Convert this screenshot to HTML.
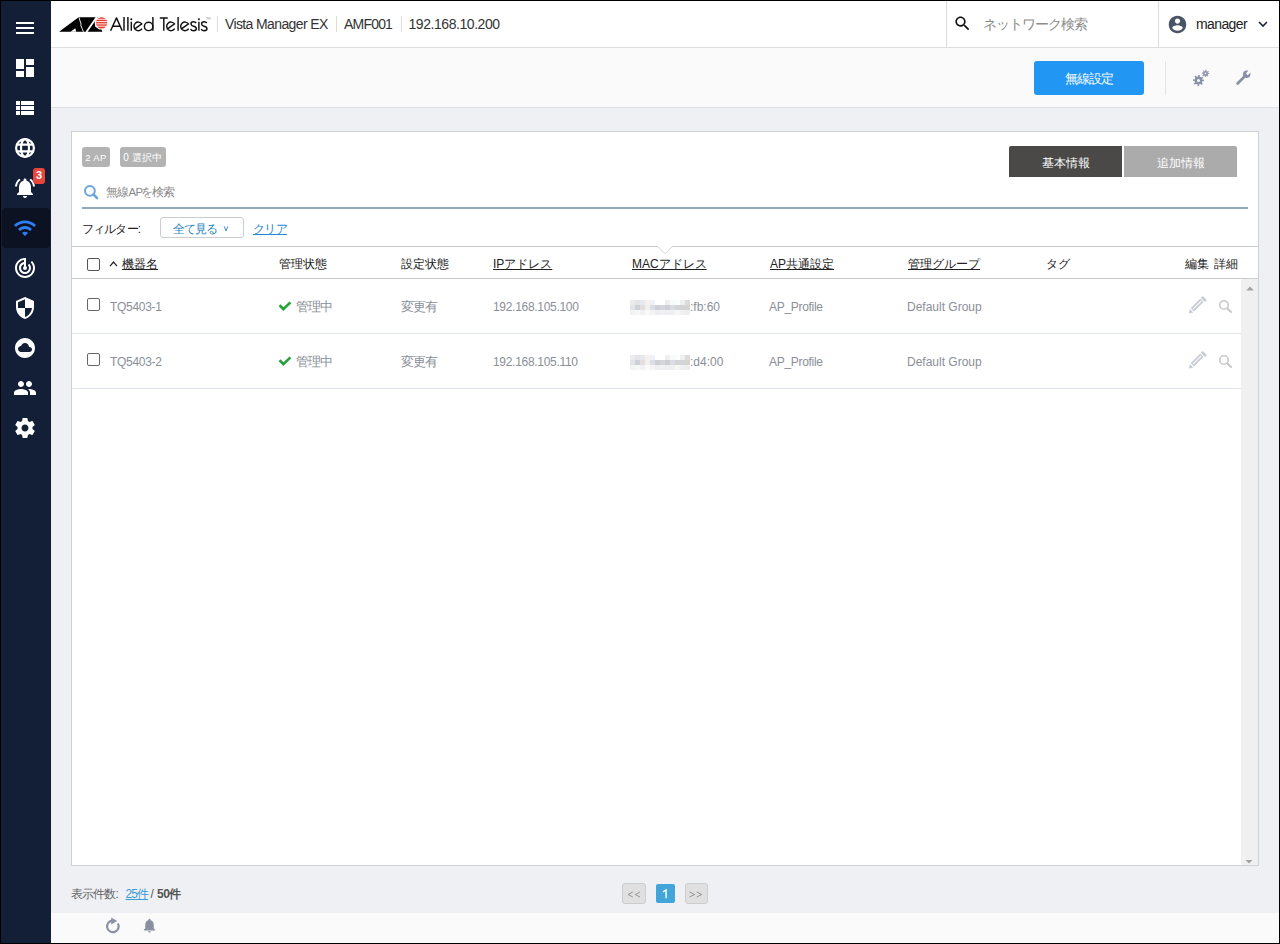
<!DOCTYPE html>
<html><head><meta charset="utf-8">
<style>
*{box-sizing:border-box;margin:0;padding:0}
html,body{width:1280px;height:944px;overflow:hidden;background:#000}
body{font-family:"Liberation Sans",sans-serif;position:relative;color:#222}
div,span,svg{position:absolute}
.t{white-space:nowrap;line-height:1}
#main{left:1px;top:1px;width:1278px;height:942px;background:#eff0f4}
#side{left:1px;top:1px;width:50px;height:942px;background:#131e37}
#active{left:2px;top:208px;width:48px;height:40px;border-radius:4px;background:#0c1221}
.si{left:13px;width:24px;height:24px;fill:#fff}
#hdr{left:51px;top:1px;width:1228px;height:47px;background:#fff;border-bottom:1px solid #dedede}
#tool{left:51px;top:48px;width:1228px;height:60px;background:#fafafa;border-bottom:1px solid #dfe0e4}
#card{left:71px;top:131px;width:1188px;height:735px;background:#fff;border:1px solid #cdd0d4}
#status{left:51px;top:913px;width:1228px;height:30px;background:#fafafa}
.th{top:258px;font-size:12px;color:#222}
.u{text-decoration:underline}
.td{font-size:12px;color:#8a8f98}
.vsep{width:1px;background:#dcdcdc}
</style></head>
<body>
<div id="main"></div>
<div id="side"></div>
<div id="active"></div>
<!-- sidebar icons -->
<svg class="si" style="top:16px" viewBox="0 0 24 24"><path d="M3 18h18v-2H3v2zm0-5h18v-2H3v2zm0-7v2h18V6H3z"/></svg>
<svg class="si" style="top:56px" viewBox="0 0 24 24"><path d="M3 13h8V3H3v10zm0 8h8v-6H3v6zm10 0h8V11h-8v10zm0-18v6h8V3h-8z"/></svg>
<svg class="si" style="top:96px" viewBox="0 0 24 24"><path d="M3 14h4v-4H3v4zm0 5h4v-4H3v4zM3 9h4V5H3v4zm5 5h13v-4H8v4zm0 5h13v-4H8v4zM8 5v4h13V5H8z"/></svg>
<svg class="si" style="top:136px" viewBox="0 0 24 24"><g fill="none" stroke="#fff" stroke-width="2.2"><circle cx="12" cy="12" r="8.9"/><ellipse cx="12" cy="12" rx="4" ry="8.9"/><path d="M3.5 8.6h17M3.5 15.4h17"/></g></svg>
<svg class="si" style="top:176px" viewBox="0 0 24 24"><path d="M7.58 4.08L6.15 2.65C3.75 4.48 2.170 7.3 2.03 10.5h2c.15-2.65 1.51-4.97 3.55-6.42zm12.39 6.42h2c-.15-3.2-1.730-6.02-4.12-7.85l-1.42 1.43c2.02 1.45 3.39 3.77 3.54 6.42zM18 11c0-3.07-1.64-5.640-4.5-6.32V4c0-.83-.67-1.5-1.5-1.5s-1.5.67-1.5 1.5v.68C7.63 5.36 6 7.92 6 11v5l-2 2v1h16v-1l-2-2v-5zm-6 11c.14 0 .27-.01.4-.04.65-.14 1.18-.58 1.44-1.18.1-.24.15-.5.15-.78h-4c.01 1.1.9 2 2.01 2z"/></svg>
<div style="left:33px;top:168px;width:12px;height:16px;border-radius:3px;background:#e8453c"></div>
<div class="t" style="left:33px;top:170px;width:12px;text-align:center;font-size:11px;font-weight:bold;color:#fff">3</div>
<svg class="si" style="top:216px;fill:#2d7ff9" viewBox="0 0 24 24"><path d="M1 9l2 2c4.97-4.97 13.03-4.97 18 0l2-2C16.93 2.93 7.08 2.93 1 9zm8 8l3 3 3-3c-1.65-1.66-4.34-1.66-6 0zm-4-4l2 2c2.76-2.76 7.24-2.76 10 0l2-2C15.14 9.140 8.87 9.14 5 13z"/></svg>
<svg class="si" style="top:256px" viewBox="0 0 24 24"><path d="M19.07 4.93l-1.41 1.41C19.1 7.79 20 9.79 20 12c0 4.42-3.58 8-8 8s-8-3.58-8-8c0-4.08 3.05-7.44 7-7.93v2.02C8.16 6.57 6 9.03 6 12c0 3.31 2.69 6 6 6s6-2.69 6-6c0-1.66-.67-3.16-1.76-4.24l-1.41 1.41C15.55 9.9 16 10.9 16 12c0 2.21-1.79 4-4 4s-4-1.79-4-4c0-1.86 1.28-3.41 3-3.86v2.14c-.6.35-1 .98-1 1.72 0 1.1.9 2 2 2s2-.9 2-2c0-.74-.4-1.38-1-1.72V2h-1C6.48 2 2 6.48 2 12s4.48 10 10 10 10-4.48 10-10c0-2.76-1.12-5.26-2.930-7.07z"/></svg>
<svg class="si" style="top:296px" viewBox="0 0 24 24"><path d="M12 1L3 5v6c0 5.55 3.84 10.74 9 12 5.16-1.26 9-6.45 9-12V5l-9-4zm0 10.99h7c-.53 4.12-3.28 7.79-7 8.94V12H5V6.3l7-3.11v8.8z"/></svg>
<svg class="si" style="top:336px" viewBox="0 0 24 24"><path fill-rule="evenodd" d="M12 2C6.48 2 2 6.48 2 12s4.48 10 10 10 10-4.48 10-10S17.52 2 12 2zm4.5 14H8c-1.66 0-3-1.34-3-3s1.34-3 3-3l.14.01C8.58 8.28 10.13 7 12 7c2.21 0 4 1.79 4 4h.5c1.38 0 2.5 1.12 2.5 2.5S17.88 16 16.5 16z"/></svg>
<svg class="si" style="top:376px" viewBox="0 0 24 24"><path d="M16 11c1.66 0 2.99-1.34 2.99-3S17.66 5 16 5c-1.66 0-3 1.34-3 3s1.34 3 3 3zm-8 0c1.66 0 2.99-1.34 2.99-3S9.66 5 8 5C6.34 5 5 6.34 5 8s1.34 3 3 3zm0 2c-2.33 0-7 1.17-7 3.5V19h14v-2.5c0-2.33-4.67-3.5-7-3.5zm8 0c-.29 0-.62.02-.97.05 1.16.84 1.97 1.97 1.97 3.45V19h6v-2.5c0-2.33-4.67-3.5-7-3.5z"/></svg>
<svg class="si" style="top:416px" viewBox="0 0 24 24"><path d="M19.43 12.98c.04-.32.07-.64.07-.98s-.03-.66-.07-.98l2.11-1.65c.19-.15.24-.42.12-.64l-2-3.46c-.12-.22-.39-.3-.61-.22l-2.49 1c-.52-.4-1.08-.73-1.69-.98l-.38-2.65C14.46 2.18 14.25 2 14 2h-4c-.25 0-.46.18-.49.42l-.38 2.65c-.61.25-1.170.59-1.69.98l-2.49-1c-.23-.09-.49 0-.61.22l-2 3.46c-.13.22-.07.49.12.64l2.11 1.65c-.04.32-.07.65-.07.98s.03.66.07.98l-2.11 1.65c-.19.15-.24.42-.12.64l2 3.46c.12.22.39.3.61.22l2.49-1c.52.4 1.08.73 1.69.98l.38 2.65c.03.24.24.42.49.42h4c.25 0 .46-.18.49-.42l.38-2.650c.61-.25 1.17-.59 1.69-.98l2.49 1c.23.09.49 0 .61-.22l2-3.46c.12-.22.07-.49-.12-.64l-2.11-1.65zM12 15.5c-1.93 0-3.5-1.57-3.5-3.5s1.57-3.5 3.5-3.5 3.5 1.57 3.5 3.5-1.57 3.5-3.5 3.5z"/></svg>

<!-- header -->
<div id="hdr"></div>
<svg style="left:56px;top:12px;width:156px;height:24px" viewBox="56 12 156 24">
  <path d="M59.1 31.7 L78.6 17.3 L98.5 17.3 L102.3 31.7 Z" fill="#000"/>
  <path d="M78.9 17.3 L81.2 24.5 L80.6 24.8 L83.4 31.8" fill="none" stroke="#fff" stroke-width="0.9"/>
  <path d="M70.5 31.8 L75.3 28.2 L76.2 31.8 Z" fill="#fff"/>
  <path d="M96.8 17 L86.4 31.9" fill="none" stroke="#fff" stroke-width="1.8"/>
  <circle cx="101.6" cy="22.9" r="6.9" fill="#fff"/>
  <circle cx="101.6" cy="22.9" r="5.7" fill="#e63b2e"/>
  <path d="M95 19.3H108M95 21.6H108M95 23.9H108M95 26.2H108" stroke="#fff" stroke-width="0.9"/>
  <g fill="none" stroke="#111" stroke-width="1.45">
   <path d="M110.6 30.7 L116.5 17.9 L122.2 30.7 M112.9 26.2 H120.1" stroke-linejoin="round"/>
   <path d="M124 17.1 V30.7 M127.9 17.1 V30.7 M131.3 21.8 V30.7"/>
   <path d="M134.8 28.9 L141.8 23.9 A4.3 4.3 0 1 0 142 28.6"/>
   <circle cx="148.6" cy="26.4" r="4.2"/><path d="M152.9 17.1 V30.7"/>
   <path d="M159.8 17.9 H167.8 M163.8 17.9 V30.7"/>
   <path d="M167.5 28.9 L174.5 23.9 A4.3 4.3 0 1 0 174.7 28.6"/>
   <path d="M178.1 17.1 V30.7"/>
   <path d="M181.5 28.9 L188.5 23.9 A4.3 4.3 0 1 0 188.7 28.6"/>
   <path d="M196.2 23 C195.5 22 194.5 21.8 193.5 21.8 C192 21.8 191 22.6 191 23.9 C191 25.3 192.3 25.8 193.6 26.2 C195.2 26.7 196.4 27.3 196.4 28.6 C196.4 30 195.2 30.8 193.5 30.8 C192.2 30.8 191.2 30.2 190.6 29.2"/>
   <path d="M198.9 21.8 V30.7"/>
   <path d="M206.8 23 C206.1 22 205.1 21.8 204.1 21.8 C202.6 21.8 201.6 22.6 201.6 23.9 C201.6 25.3 202.9 25.8 204.2 26.2 C205.8 26.7 207 27.3 207 28.6 C207 30 205.8 30.8 204.1 30.8 C202.8 30.8 201.8 30.2 201.2 29.2"/>
  </g>
  <circle cx="131.3" cy="19.3" r="1" fill="#111"/><circle cx="198.9" cy="19.3" r="1" fill="#111"/><path d="M206.2 17.6 H208.4 M207.3 17.6 V19.6 M208.8 19.6 V17.6 L209.5 18.8 L210.2 17.6 V19.6" fill="none" stroke="#999" stroke-width="0.45"/>
</svg>
<div class="vsep" style="left:217px;top:16px;height:16px"></div>
<div class="t" style="left:225px;top:16.5px;font-size:14px;color:#333;letter-spacing:-0.62px">Vista Manager EX</div>
<div class="vsep" style="left:336px;top:16px;height:16px"></div>
<div class="t" style="left:344px;top:16.5px;font-size:14px;color:#333;letter-spacing:-0.8px">AMF001</div>
<div class="vsep" style="left:401px;top:16px;height:16px"></div>
<div class="t" style="left:408.5px;top:16.5px;font-size:14px;color:#333;letter-spacing:-0.44px">192.168.10.200</div>
<div class="vsep" style="left:946px;top:1px;height:46px"></div>
<svg style="left:953px;top:14px;width:19px;height:19px" viewBox="0 0 24 24"><path fill="#111" d="M15.5 14h-.79l-.28-.27C15.41 12.59 16 11.11 16 9.5 16 5.91 13.09 3 9.5 3S3 5.91 3 9.5 5.91 16 9.5 16c1.61 0 3.09-.59 4.23-1.57l.27.28v.79l5 4.99L20.49 19l-4.99-5zm-6 0C7.01 14 5 11.990 5 9.5S7.01 5 9.5 5 14 7.01 14 9.5 11.99 14 9.5 14z"/></svg>
<div class="t" style="left:983px;top:17px;font-size:14px;color:#8c8c8c;letter-spacing:-1px">ネットワーク検索</div>
<div class="vsep" style="left:1158px;top:1px;height:46px"></div>
<svg style="left:1167px;top:14px;width:21px;height:21px" viewBox="0 0 24 24"><path fill="#4a5467" d="M12 2C6.48 2 2 6.48 2 12s4.48 10 10 10 10-4.48 10-10S17.52 2 12 2zm0 3c1.66 0 3 1.34 3 3s-1.34 3-3 3-3-1.34-3-3 1.34-3 3-3zm0 14.2c-2.5 0-4.71-1.28-6-3.22.03-1.99 4-3.08 6-3.08 1.99 0 5.97 1.09 6 3.08-1.29 1.94-3.5 3.22-6 3.22z"/></svg>
<div class="t" style="left:1196px;top:16.5px;font-size:14px;color:#222;letter-spacing:-0.6px">manager</div>
<svg style="left:1257px;top:18px;width:12px;height:12px" viewBox="0 0 12 12"><path d="M2 4l4 4 4-4" fill="none" stroke="#1c2540" stroke-width="1.6"/></svg>

<!-- toolbar -->
<div id="tool"></div>
<div style="left:1034px;top:61px;width:110px;height:34px;border-radius:3px;background:#2196f3"></div>
<div class="t" style="left:1034px;top:71.5px;width:110px;text-align:center;font-size:13px;color:#fff;letter-spacing:-0.8px">無線設定</div>
<div class="vsep" style="left:1165px;top:61px;height:34px;background:#e3e3e3"></div>
<svg style="left:1185px;top:62px;width:75px;height:32px" viewBox="1185 62 75 32">
 <g fill="#8a90a6">
  <circle cx="1198.5" cy="80.45" r="3.9"/>
  <circle cx="1198.5" cy="80.45" r="4.5" fill="none" stroke="#8a90a6" stroke-width="2" stroke-dasharray="1.55 1.98" transform="rotate(-10 1198.5 80.45)"/>
  <circle cx="1198.5" cy="80.45" r="1.5" fill="#fafafa"/>
  <circle cx="1205.5" cy="73.4" r="2.5"/>
  <circle cx="1205.5" cy="73.4" r="3" fill="none" stroke="#8a90a6" stroke-width="1.3" stroke-dasharray="1.05 1.31" transform="rotate(-10 1205.5 73.4)"/>
  <circle cx="1205.5" cy="73.4" r="0.9" fill="#fafafa"/>
 </g>
 <path d="M1237.6 83.5 L1244.8 76.3" stroke="#8a90a6" stroke-width="2.7" stroke-linecap="round"/>
 <circle cx="1246.7" cy="74.3" r="3.7" fill="#8a90a6"/>
 <rect x="1247.3" y="70" width="2.6" height="5" fill="#fafafa" transform="rotate(45 1248.6 72.5)"/>
</svg>

<!-- card -->
<div id="card"></div>
<div style="left:82px;top:147px;width:28px;height:20px;border-radius:3px;background:#b3b3b3"></div>
<div class="t" style="left:82px;top:152.5px;width:28px;text-align:center;font-size:9.5px;color:#fff;letter-spacing:0.4px">2 AP</div>
<div style="left:120px;top:147px;width:46px;height:20px;border-radius:3px;background:#b3b3b3"></div>
<div class="t" style="left:120px;top:152.5px;width:46px;text-align:center;font-size:10px;color:#fff;letter-spacing:0.2px">0 選択中</div>
<div style="left:1009px;top:146px;width:113px;height:31px;background:#4a4948;border-radius:2px 0 0 0"></div>
<div class="t" style="left:1009px;top:157px;width:113px;text-align:center;font-size:12px;color:#fff">基本情報</div>
<div style="left:1124px;top:146px;width:113px;height:31px;background:#ababab;border-radius:0 2px 0 0"></div>
<div class="t" style="left:1124px;top:157px;width:113px;text-align:center;font-size:12px;color:#fff">追加情報</div>
<svg style="left:83px;top:184px;width:16px;height:16px" viewBox="0 0 16 16"><circle cx="6.9" cy="6.8" r="4.9" fill="none" stroke="#6aa5dc" stroke-width="2"/><path d="M10.4 10.4 L14 14" stroke="#6aa5dc" stroke-width="2.6" stroke-linecap="round"/></svg>
<div class="t" style="left:106px;top:186px;font-size:12px;color:#8a8a8a;letter-spacing:-0.9px">無線</div>
<div class="t" style="left:128.5px;top:187px;font-size:11.5px;color:#8a8a8a;letter-spacing:-0.6px">AP</div>
<div class="t" style="left:141px;top:186px;font-size:12px;color:#8a8a8a;letter-spacing:-1px">を検索</div>
<div style="left:82px;top:207px;width:1166px;height:2px;background:#91a8bd"></div>
<div class="t" style="left:82px;top:222.5px;font-size:12px;color:#222;letter-spacing:-0.85px">フィルター:</div>
<div style="left:160px;top:217px;width:84px;height:21px;border:1px solid #c9cdd2;border-radius:3px;background:#fff"></div>
<div class="t" style="left:173px;top:222.5px;font-size:12px;color:#2b86c5;letter-spacing:-1px">全て見る</div>
<svg style="left:223px;top:225px;width:6px;height:7px" viewBox="0 0 6 7"><path d="M1.2 1.3 L3 6 L4.8 1.3" fill="none" stroke="#2b86c5" stroke-width="0.9"/></svg>
<div class="t" style="left:253px;top:222.5px;font-size:12px;color:#1e88d6;text-decoration:underline;letter-spacing:-0.7px">クリア</div>
<!-- table header -->
<div style="left:72px;top:246px;width:1186px;height:1px;background:#c9cdd1"></div>
<svg style="left:655px;top:244px;width:20px;height:12px" viewBox="655 244 20 12"><rect x="658" y="245" width="14" height="2.5" fill="#fff"/><path d="M657.6 246.5 L665 253.7 L672.4 246.5" fill="#fff" stroke="#d0d4d8" stroke-width="1"/></svg>
<div style="left:72px;top:278px;width:1186px;height:1px;background:#c9cdd1"></div>
<div style="left:87px;top:258px;width:13px;height:13px;border:1px solid #555;border-radius:2px;background:#fff"></div>
<svg style="left:109px;top:261px;width:9px;height:6px" viewBox="0 0 9 6"><path d="M1 5.2 L4.5 1 L8 5.2" fill="none" stroke="#222" stroke-width="1.2"/></svg>
<div class="t th u" style="left:122px">機器名</div>
<div class="t th" style="left:279px">管理状態</div>
<div class="t th" style="left:401px">設定状態</div>
<div class="t th u" style="left:493px">IPアドレス</div>
<div class="t th u" style="left:632px">MACアドレス</div>
<div class="t th u" style="left:770px">AP共通設定</div>
<div class="t th u" style="left:908px">管理グループ</div>
<div class="t th" style="left:1046px">タグ</div>
<div class="t th" style="left:1185px">編集</div>
<div class="t th" style="left:1214px">詳細</div>
<!-- rows -->
<div style="left:72px;top:333px;width:1169px;height:1px;background:#dfe5ea"></div>
<div style="left:72px;top:388px;width:1169px;height:1px;background:#dfe5ea"></div>
<div style="left:1241px;top:279px;width:17px;height:586px;background:#f0f0f0"></div>
<svg style="left:1244.5px;top:284.5px;width:10px;height:6px" viewBox="0 0 10 6"><path d="M1.2 5.6 L5 1.6 L8.8 5.6Z" fill="#a3a3a3"/></svg>
<svg style="left:1244px;top:859px;width:10px;height:6px" viewBox="0 0 10 6"><path d="M1.5 1 L5 4.5 L8.5 1Z" fill="#a0a0a0"/></svg>
<div style="left:87px;top:298px;width:13px;height:13px;border:1px solid #666;border-radius:2px;background:#fff"></div>
<div class="t td" style="left:110px;top:301px;letter-spacing:-0.3px">TQ5403-1</div>
<svg style="left:278px;top:301px;width:14px;height:11px" viewBox="0 0 14 11"><path d="M1.6 4.3 L5.4 8.2 L12.4 1.4" fill="none" stroke="#24a33a" stroke-width="2.7"/></svg>
<div class="t td" style="left:296px;top:299.5px;font-size:13px;letter-spacing:-1px">管理中</div>
<div class="t td" style="left:401px;top:299.5px;font-size:13px;letter-spacing:-1px">変更有</div>
<div class="t td" style="left:493px;top:301px;letter-spacing:-0.3px">192.168.105.100</div>
<svg style="left:630px;top:300px;width:60px;height:15px" viewBox="0 0 60 15" shape-rendering="crispEdges"><rect x="0" y="0" width="5" height="5" fill="#ececec"/><rect x="5" y="0" width="5" height="5" fill="#e3e5e8"/><rect x="10" y="0" width="5" height="5" fill="#e6eaed"/><rect x="15" y="0" width="5" height="5" fill="#f4f1ee"/><rect x="20" y="0" width="5" height="5" fill="#eef2f8"/><rect x="25" y="0" width="5" height="5" fill="#ffffff"/><rect x="30" y="0" width="5" height="5" fill="#ffffff"/><rect x="35" y="0" width="5" height="5" fill="#f1eeee"/><rect x="40" y="0" width="5" height="5" fill="#f6fbfc"/><rect x="45" y="0" width="5" height="5" fill="#fcfdfd"/><rect x="50" y="0" width="5" height="5" fill="#efeef0"/><rect x="55" y="0" width="5" height="5" fill="#dcdcdc"/><rect x="0" y="5" width="5" height="5" fill="#e4e4e8"/><rect x="5" y="5" width="5" height="5" fill="#cdd0d5"/><rect x="10" y="5" width="5" height="5" fill="#e4dfde"/><rect x="15" y="5" width="5" height="5" fill="#f3efea"/><rect x="20" y="5" width="5" height="5" fill="#d8dde6"/><rect x="25" y="5" width="5" height="5" fill="#cfcfd2"/><rect x="30" y="5" width="5" height="5" fill="#d3d6dc"/><rect x="35" y="5" width="5" height="5" fill="#cfcfd3"/><rect x="40" y="5" width="5" height="5" fill="#d8dee3"/><rect x="45" y="5" width="5" height="5" fill="#d4d4d6"/><rect x="50" y="5" width="5" height="5" fill="#d2d4d7"/><rect x="55" y="5" width="5" height="5" fill="#d6d4d3"/><rect x="0" y="10" width="5" height="5" fill="#f3f3f3"/><rect x="5" y="10" width="5" height="5" fill="#f7f7f7"/><rect x="10" y="10" width="5" height="5" fill="#f1f1f1"/><rect x="15" y="10" width="5" height="5" fill="#f9f9f9"/><rect x="20" y="10" width="5" height="5" fill="#f3f3f5"/><rect x="25" y="10" width="5" height="5" fill="#efeff1"/><rect x="30" y="10" width="5" height="5" fill="#f0f1f3"/><rect x="35" y="10" width="5" height="5" fill="#eeeff2"/><rect x="40" y="10" width="5" height="5" fill="#eef0f2"/><rect x="45" y="10" width="5" height="5" fill="#f8f6f2"/><rect x="50" y="10" width="5" height="5" fill="#eef0f4"/><rect x="55" y="10" width="5" height="5" fill="#eeeeef"/></svg>
<div class="t td" style="left:690px;top:301px">:fb:60</div>
<div class="t td" style="left:769px;top:301px;letter-spacing:-0.3px">AP_Profile</div>
<div class="t td" style="left:907px;top:301px">Default Group</div>
<svg style="left:1186px;top:296px;width:22px;height:20px" viewBox="1186 296 22 20"><path d="M1192.3 309.8 L1202 300.1" stroke="#c5cad3" stroke-width="4.6"/><path d="M1193 309.1 L1201.3 300.8" stroke="#fff" stroke-width="1.1"/><path d="M1201 298.6 L1204.2 301.8" stroke="#fff" stroke-width="0.9"/><path d="M1202.5 297.6 L1205.2 300.3" stroke="#c5cad3" stroke-width="2.6" stroke-linecap="round"/><path d="M1188.8 313.6 L1189.9 309.2 L1193.3 312.6 Z" fill="#c5cad3"/></svg>
<svg style="left:1218px;top:299px;width:15px;height:14px" viewBox="0 0 15 14"><circle cx="6" cy="6" r="4.3" fill="none" stroke="#c8c8c8" stroke-width="1.6"/><path d="M9.2 9.2 L13 13" stroke="#c8c8c8" stroke-width="2" stroke-linecap="round"/></svg>
<div style="left:87px;top:353px;width:13px;height:13px;border:1px solid #666;border-radius:2px;background:#fff"></div>
<div class="t td" style="left:110px;top:356px;letter-spacing:-0.3px">TQ5403-2</div>
<svg style="left:278px;top:356px;width:14px;height:11px" viewBox="0 0 14 11"><path d="M1.6 4.3 L5.4 8.2 L12.4 1.4" fill="none" stroke="#24a33a" stroke-width="2.7"/></svg>
<div class="t td" style="left:296px;top:354.5px;font-size:13px;letter-spacing:-1px">管理中</div>
<div class="t td" style="left:401px;top:354.5px;font-size:13px;letter-spacing:-1px">変更有</div>
<div class="t td" style="left:493px;top:356px;letter-spacing:-0.3px">192.168.105.110</div>
<svg style="left:630px;top:355px;width:60px;height:15px" viewBox="0 0 60 15" shape-rendering="crispEdges"><rect x="0" y="0" width="5" height="5" fill="#ececec"/><rect x="5" y="0" width="5" height="5" fill="#e3e5e8"/><rect x="10" y="0" width="5" height="5" fill="#e6eaed"/><rect x="15" y="0" width="5" height="5" fill="#f4f1ee"/><rect x="20" y="0" width="5" height="5" fill="#eef2f8"/><rect x="25" y="0" width="5" height="5" fill="#ffffff"/><rect x="30" y="0" width="5" height="5" fill="#ffffff"/><rect x="35" y="0" width="5" height="5" fill="#f1eeee"/><rect x="40" y="0" width="5" height="5" fill="#f6fbfc"/><rect x="45" y="0" width="5" height="5" fill="#fcfdfd"/><rect x="50" y="0" width="5" height="5" fill="#efeef0"/><rect x="55" y="0" width="5" height="5" fill="#dcdcdc"/><rect x="0" y="5" width="5" height="5" fill="#e4e4e8"/><rect x="5" y="5" width="5" height="5" fill="#cdd0d5"/><rect x="10" y="5" width="5" height="5" fill="#e4dfde"/><rect x="15" y="5" width="5" height="5" fill="#f3efea"/><rect x="20" y="5" width="5" height="5" fill="#d8dde6"/><rect x="25" y="5" width="5" height="5" fill="#cfcfd2"/><rect x="30" y="5" width="5" height="5" fill="#d3d6dc"/><rect x="35" y="5" width="5" height="5" fill="#cfcfd3"/><rect x="40" y="5" width="5" height="5" fill="#d8dee3"/><rect x="45" y="5" width="5" height="5" fill="#d4d4d6"/><rect x="50" y="5" width="5" height="5" fill="#d2d4d7"/><rect x="55" y="5" width="5" height="5" fill="#d6d4d3"/><rect x="0" y="10" width="5" height="5" fill="#f3f3f3"/><rect x="5" y="10" width="5" height="5" fill="#f7f7f7"/><rect x="10" y="10" width="5" height="5" fill="#f1f1f1"/><rect x="15" y="10" width="5" height="5" fill="#f9f9f9"/><rect x="20" y="10" width="5" height="5" fill="#f3f3f5"/><rect x="25" y="10" width="5" height="5" fill="#efeff1"/><rect x="30" y="10" width="5" height="5" fill="#f0f1f3"/><rect x="35" y="10" width="5" height="5" fill="#eeeff2"/><rect x="40" y="10" width="5" height="5" fill="#eef0f2"/><rect x="45" y="10" width="5" height="5" fill="#f8f6f2"/><rect x="50" y="10" width="5" height="5" fill="#eef0f4"/><rect x="55" y="10" width="5" height="5" fill="#eeeeef"/></svg>
<div class="t td" style="left:690px;top:356px">:d4:00</div>
<div class="t td" style="left:769px;top:356px;letter-spacing:-0.3px">AP_Profile</div>
<div class="t td" style="left:907px;top:356px">Default Group</div>
<svg style="left:1186px;top:351px;width:22px;height:20px" viewBox="1186 296 22 20"><path d="M1192.3 309.8 L1202 300.1" stroke="#c5cad3" stroke-width="4.6"/><path d="M1193 309.1 L1201.3 300.8" stroke="#fff" stroke-width="1.1"/><path d="M1201 298.6 L1204.2 301.8" stroke="#fff" stroke-width="0.9"/><path d="M1202.5 297.6 L1205.2 300.3" stroke="#c5cad3" stroke-width="2.6" stroke-linecap="round"/><path d="M1188.8 313.6 L1189.9 309.2 L1193.3 312.6 Z" fill="#c5cad3"/></svg>
<svg style="left:1218px;top:354px;width:15px;height:14px" viewBox="0 0 15 14"><circle cx="6" cy="6" r="4.3" fill="none" stroke="#c8c8c8" stroke-width="1.6"/><path d="M9.2 9.2 L13 13" stroke="#c8c8c8" stroke-width="2" stroke-linecap="round"/></svg>


<!-- status -->
<div class="t" style="left:71px;top:887.5px;font-size:12px;color:#666;letter-spacing:-0.9px">表示件数:</div>
<div class="t" style="left:125.5px;top:887.5px;font-size:12px;color:#3a9ad9;text-decoration:underline;letter-spacing:-0.9px">25件</div>
<div class="t" style="left:150.5px;top:887.5px;font-size:12px;color:#555">/</div>
<div class="t" style="left:157px;top:887.5px;font-size:12px;color:#555;font-weight:bold;letter-spacing:-0.5px">50件</div>
<div style="left:622px;top:883px;width:24px;height:21px;border:1px solid #cdcdcd;border-radius:3px;background:#e0e0e0"></div>

<div style="left:656px;top:884px;width:19px;height:19px;border-radius:2px;background:#42a5da"></div>

<div style="left:685px;top:883px;width:23px;height:21px;border:1px solid #cdcdcd;border-radius:3px;background:#e0e0e0"></div>
<svg style="left:620px;top:885px;width:90px;height:16px" viewBox="620 885 90 16"><path d="M632.8 892 L628 894.5 L632.8 897 M640 892 L635.2 894.5 L640 897 M689.6 892 L694.6 894.5 L689.6 897 M696.8 892 L701.8 894.5 L696.8 897" fill="none" stroke="#8a8a8a" stroke-width="0.9"/><path d="M663 891.9 L666.1 890 V898.2" fill="none" stroke="#fff" stroke-width="1.4"/></svg>

<div id="status"></div>
<svg style="left:104px;top:916px;width:18px;height:18px" viewBox="104 916 18 18"><path d="M112.9 920.6 A5.8 5.8 0 1 0 117.9 923.5" fill="none" stroke="#8a90a6" stroke-width="2.2"/><path d="M111.2 917.6 L117.2 921.1 L111.2 924.5 Z" fill="#8a90a6"/></svg>
<svg style="left:141px;top:917px;width:17px;height:17px" viewBox="0 0 24 24"><path fill="#8a90a0" d="M12 22c1.1 0 2-.9 2-2h-4c0 1.1.89 2 2 2zm6-6v-5c0-3.07-1.64-5.64-4.5-6.32V4c0-.83-.67-1.5-1.5-1.5s-1.5.67-1.5 1.5v.68C7.63 5.36 6 7.92 6 11v5l-2 2v1h16v-1l-2-2z"/></svg>
</body></html>
